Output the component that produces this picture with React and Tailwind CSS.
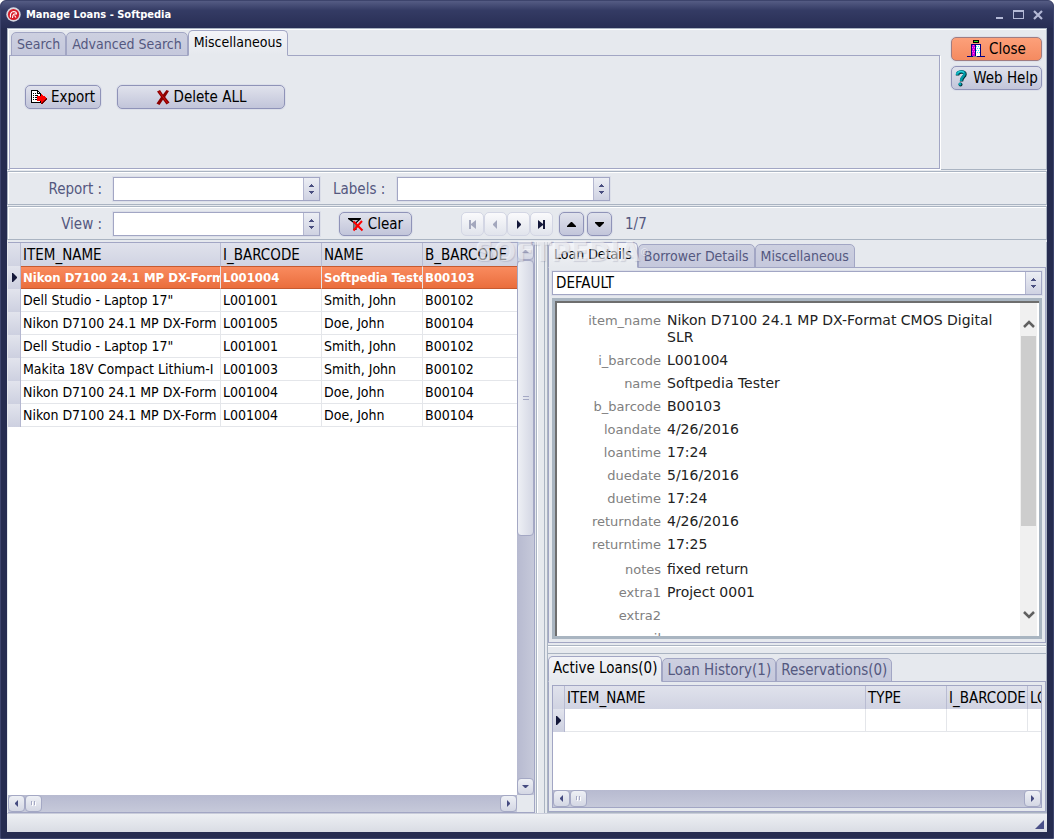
import React, { useState } from "react";
import clsx from "clsx";

const loans = [
  ["Nikon D7100 24.1 MP DX-Form", "L001004", "Softpedia Tester", "B00103"],
  ['Dell Studio - Laptop 17"', "L001001", "Smith, John", "B00102"],
  ["Nikon D7100 24.1 MP DX-Form", "L001005", "Doe, John", "B00104"],
  ['Dell Studio - Laptop 17"', "L001001", "Smith, John", "B00102"],
  ["Makita 18V Compact Lithium-I", "L001003", "Smith, John", "B00102"],
  ["Nikon D7100 24.1 MP DX-Form", "L001004", "Doe, John", "B00104"],
  ["Nikon D7100 24.1 MP DX-Form", "L001004", "Doe, John", "B00104"],
];

const details = [
  ["item_name", "Nikon D7100 24.1 MP DX-Format CMOS Digital SLR"],
  ["i_barcode", "L001004"],
  ["name", "Softpedia Tester"],
  ["b_barcode", "B00103"],
  ["loandate", "4/26/2016"],
  ["loantime", "17:24"],
  ["duedate", "5/16/2016"],
  ["duetime", "17:24"],
  ["returndate", "4/26/2016"],
  ["returntime", "17:25"],
  ["notes", "fixed return"],
  ["extra1", "Project 0001"],
  ["extra2", ""],
  ["email", ""],
];

function Tabs({ items, active, onChange, label, tabClass = "px-[5px] text-[14px]" }) {
  return (
    <div role="tablist" aria-label={label} className="relative z-10 -mb-px flex items-end">
      {items.map((item, i) => (
        <button
          key={item}
          role="tab"
          aria-selected={i === active}
          onClick={() => onChange(i)}
          className={clsx(
            "shrink-0 whitespace-nowrap rounded-t-[5px] border border-[#a2a6c4]",
            tabClass,
            i === active
              ? "h-[26px] border-b-[#e6e9ee] bg-linear-to-b from-[#f3f4f8] to-[#e6e9ee] pb-[3px] text-black"
              : "h-6 bg-linear-to-b from-[#cdd0e0] to-[#c5c8dc] text-[#54587f]"
          )}
        >
          {item}
        </button>
      ))}
    </div>
  );
}

function Combo({ label, options, className }) {
  return (
    <span
      className={clsx(
        "flex h-6 min-w-0 border border-[#a2a6c4] bg-white shadow-[0_0_0_1px_#dcdfe9]",
        className
      )}
    >
      <select
        aria-label={label}
        className="min-w-0 flex-1 appearance-none bg-white px-[3px] text-[15px] text-black outline-none"
      >
        {options.map((o) => (
          <option key={o}>{o}</option>
        ))}
      </select>
      <span className="flex w-4 items-center justify-center border-l border-[#b4b7d0] bg-linear-to-b from-[#eceef4] to-[#cfd2e2]">
        <svg width="7" height="10" viewBox="0 0 7 10" fill="#4a4f80" shapeRendering="crispEdges">
          <path d="M3 0h1v1h1v1h1v1H1V2h1V1h1zM1 7h5v1H5v1H4v1H3V9H2V8H1z" />
        </svg>
      </span>
    </span>
  );
}

function Button({ children, className, tone = "normal", ...rest }) {
  return (
    <button
      className={clsx(
        "flex h-6 items-center justify-center whitespace-nowrap rounded-[5px] border text-[15px] shadow-[0_0_0_1px_#dcdfe9]",
        tone === "hot"
          ? "border-[#a07c80] bg-linear-to-b from-[#fca07a] to-[#f58a60]"
          : "border-[#8f93b8] bg-linear-to-b from-[#e0e2ec] to-[#c2c5da]",
        className
      )}
      {...rest}
    >
      {children}
    </button>
  );
}

function NavButton({ label, path, muted }) {
  return (
    <button
      aria-label={label}
      className="flex h-6 w-[23px] items-center justify-center rounded-[5px] border border-[#d3d6e4] bg-linear-to-b from-[#fafafc] to-[#e1e4ec]"
    >
      <svg width="9" height="11" viewBox="0 0 9 11" fill={muted ? "#a3a7bd" : "#14183a"}>
        <path d={path} />
      </svg>
    </button>
  );
}

const arrows = {
  up: "M1 6h7L5 3H4z",
  down: "M1 3h7L5 6H4z",
  left: "M6 1v7L3 5V4z",
  right: "M3 1v7l3-3V4z",
};

function ScrollButton({ dir }) {
  return (
    <button
      aria-label={"Scroll " + dir}
      className="flex h-[17px] w-[17px] shrink-0 items-center justify-center rounded-[4px] border border-[#a4a8c4] bg-linear-to-b from-[#eef0f5] to-[#d4d7e4]"
    >
      <svg width="9" height="9" viewBox="0 0 9 9" fill="#454b80">
        <path d={arrows[dir]} />
      </svg>
    </button>
  );
}

function HScroll() {
  return (
    <div className="flex h-[17px] bg-linear-to-b from-[#b7bad0] to-[#c6c9da]">
      <ScrollButton dir="left" />
      <div className="flex w-[17px] items-center justify-center rounded-[4px] border border-[#a4a8c4] bg-linear-to-b from-[#eef0f5] to-[#d4d7e4]">
        <svg width="6" height="5" viewBox="0 0 6 5" shapeRendering="crispEdges">
          <path d="M1 1h1v4H1zM4 1h1v4H4z" fill="#fff" />
          <path d="M0 0h1v4H0zM3 0h1v4H3z" fill="#a4a8c4" />
        </svg>
      </div>
      <div className="flex-1" />
      <ScrollButton dir="right" />
    </div>
  );
}

function RowMarker() {
  return (
    <svg width="5" height="9" viewBox="0 0 5 9" className="mx-auto" fill="#14183a">
      <path d="M0 0h1l4 4v1L1 9H0z" />
    </svg>
  );
}

function AppIcon() {
  return (
    <svg width="15" height="15" viewBox="0 0 15 15">
      <circle cx="7.500" cy="7.500" r="7.200" fill="#d8d8e0" />
      <circle cx="7.500" cy="7.500" r="5.600" fill="#d81c28" />
      <path
        d="M4.500 10.500c-.5-3 .5-5.500 3-6 2 0 3 .8 3 2.500H8M6.500 11c0-2 0-3 1.500-4M8.500 8.500l1.500 2"
        fill="none"
        stroke="#fff"
        strokeWidth="1.100"
      />
    </svg>
  );
}

function ExportIcon() {
  return (
    <svg width="16" height="16" viewBox="0 0 16 16" shapeRendering="crispEdges">
      <path d="M.5 1.500h6l3 3v9h-9z" fill="#fff" stroke="#000" />
      <path d="M6.500 1.500v3h3" fill="none" stroke="#000" />
      <path d="M2 4h1v1H2zM4 4h1v1H4zM2 6h1v1H2zM4 6h3v1H4zM2 8h1v1H2zM4 8h2v1H4zM2 10h1v1H2zM4 10h2v1H4z" fill="#000" />
      <path d="M6 7h4V4.500L16 9.500l-5.500 5.500H10v-3H6z" fill="#f00" />
      <path d="M10.500 15L16 9.500" stroke="#700000" />
    </svg>
  );
}

function DeleteIcon() {
  return (
    <svg width="14" height="15" viewBox="0 0 14 15">
      <path
        d="M1 1.500L4 0l3 4.500L10.500 0 13 1 9.200 7l4.300 5.500-3 2L7 9.800 3.500 15 .5 13.500 5 7z"
        fill="#8c0000"
      />
      <path d="M3 1.500l4 5.500M7 7l4.500 6" stroke="#d01010" />
    </svg>
  );
}

function DoorIcon() {
  return (
    <svg width="18" height="18" viewBox="0 0 18 18" shapeRendering="crispEdges">
      <path d="M6 0h6v3H6z" fill="#000" />
      <path d="M7 1h4v1H7z" fill="#20e020" />
      <path d="M4 4h10v12h4v1H0v-1h4z" fill="#000080" />
      <path d="M5 5h3v11H5z" fill="#d000d0" />
      <path d="M6 5h1v1H6zM5 7h1v1H5zM7 7h1v1H7zM6 9h1v1H6zM5 11h1v1H5zM7 11h1v1H7zM6 13h1v1H6z" fill="#ff50ff" />
      <path d="M9 5h4v11H9z" fill="#fff" />
      <path d="M9 6h1v1H9zM11 6h1v1h-1zM10 8h1v1h-1zM12 8h1v1h-1zM9 10h1v1H9zM11 10h1v1h-1zM10 12h1v1h-1zM12 12h1v1h-1z" fill="#30e8f0" />
      <path d="M6 16h4v1H6z" fill="#808080" />
    </svg>
  );
}

function HelpIcon() {
  return (
    <svg width="12" height="17" viewBox="0 0 12 17" fill="none">
      <path d="M2.500 5.500C2.500 1 10.500 1 10 4.500 9.800 7 6.500 7 6.500 11.500" stroke="#003038" strokeWidth="3.400" />
      <path d="M2 5C2 .5 10 .5 9.500 4 9.300 6.500 6 6.500 6 11" stroke="#009aa8" strokeWidth="2.600" />
      <path d="M2 3.500C4 1 7 1 9 2.500" stroke="#40e8f0" />
      <circle cx="5.500" cy="14.500" r="2" fill="#003038" />
      <circle cx="5" cy="14" r="1.500" fill="#00a8b8" />
    </svg>
  );
}

function ClearIcon() {
  return (
    <svg width="16" height="15" viewBox="0 0 16 15">
      <path d="M0 1h13v1L8.500 6v7H5.500V6L0 2z" fill="#000" />
      <path d="M4 3h6L7.500 5.500h-1z" fill="#b8bcc8" />
      <path d="M6.500 6.500h1V12h-1z" fill="#fff" />
      <path d="M5.500 4.500l9 9M14 4l-8.500 9.500" stroke="#f00" strokeWidth="2" />
    </svg>
  );
}

const headCell =
  "h-[23px] overflow-hidden border-r border-[#b9bcd2] pl-0.5 text-left text-[15px] font-normal whitespace-nowrap last:border-r-0";
const bodyCell =
  "h-[23px] overflow-hidden border-r border-b border-[#e4e6ea] pl-0.5 whitespace-nowrap last:border-r-0";
const gutter =
  "border-r border-[#b4b7d0] bg-linear-to-b from-[#e2e4ed] to-[#cdd0e0] p-0";

function LoansGrid() {
  const [selected, setSelected] = useState(0);

  return (
    <div className="ml-px flex min-h-0 flex-col border border-l-0 border-[#a2a6c4] bg-[#e6e9ee]">
      <div className="flex min-h-0 flex-1">
        <div className="min-w-0 flex-1 overflow-hidden bg-white">
          <table className="w-full table-fixed border-separate border-spacing-0">
            <colgroup>
              <col className="w-[13px]" />
              <col />
              <col className="w-[101px]" />
              <col className="w-[101px]" />
              <col className="w-[94px]" />
            </colgroup>
            <thead>
              <tr className="bg-linear-to-b from-[#e0e2ec] to-[#d0d3e2]">
                <th className={headCell} aria-label="Current row" />
                <th className={headCell}>ITEM_NAME</th>
                <th className={headCell}>I_BARCODE</th>
                <th className={headCell}>NAME</th>
                <th className={headCell}>B_BARCODE</th>
              </tr>
            </thead>
            <tbody>
              {loans.map((row, i) => (
                <tr
                  key={i}
                  onClick={() => setSelected(i)}
                  className={clsx(
                    i === selected &&
                      "bg-linear-to-b from-[#fa8c60] to-[#e96c3a] text-[13px] font-bold text-white"
                  )}
                >
                  <td className={gutter}>{i === selected && <RowMarker />}</td>
                  {row.map((cell, j) => (
                    <td
                      key={j}
                      className={clsx(bodyCell, i === selected && "border-t border-y-[#c65a30]")}
                    >
                      {cell}
                    </td>
                  ))}
                </tr>
              ))}
            </tbody>
          </table>
        </div>
        <div className="flex w-[17px] flex-col bg-linear-to-r from-[#b7bad0] to-[#c6c9da]">
          <ScrollButton dir="up" />
          <div className="flex h-1/2 items-center justify-center rounded-[4px] border border-[#a4a8c4] bg-linear-to-r from-[#eef0f5] to-[#d4d7e4]">
            <svg width="6" height="5" viewBox="0 0 6 5" fill="#a4a8c4">
              <path d="M0 0h6v1H0zM0 3h6v1H0z" />
            </svg>
          </div>
          <div className="flex-1" />
          <ScrollButton dir="down" />
        </div>
      </div>
      <div className="pr-[17px]">
        <HScroll />
      </div>
    </div>
  );
}

function LoanDetails() {
  const [tab, setTab] = useState(0);

  return (
    <section className="flex min-h-0 flex-1 flex-col">
      <Tabs
        label="Details"
        items={["Loan Details", "Borrower Details", "Miscellaneous"]}
        active={tab}
        onChange={setTab}
      />
      <div className="flex min-h-0 flex-1 flex-col gap-[3px] border border-[#a2a6c4] p-[3px]">
        <Combo label="Layout" options={["DEFAULT"]} />
        <div className="flex min-h-0 flex-1 border-[3px] border-[#a9b5c1] bg-white">
          <div className="flex min-h-0 min-w-0 flex-1 border-t-2 border-l-2 border-[#6e6e6e] pr-0.5">
            <dl className="grid min-w-0 flex-1 grid-cols-[104px_1fr] content-start gap-x-[6px] gap-y-[6px] overflow-hidden pt-[9px] font-['DejaVu_Sans'] text-[14px] leading-[17px] text-[#222]">
              {details.map(([name, value]) => (
                <React.Fragment key={name}>
                  <dt
                    className={clsx(
                      "text-right text-[13px] text-[#808080]",
                      name === "notes" && "mt-0.5"
                    )}
                  >
                    {name}
                  </dt>
                  <dd className={clsx(name === "notes" && "mt-0.5")}>{value}</dd>
                </React.Fragment>
              ))}
            </dl>
            <div className="flex w-[17px] flex-col items-center bg-[#f0f0f0] py-4">
              <svg width="12" height="9" viewBox="0 0 12 9" className="shrink-0" fill="none" stroke="#606060" strokeWidth="2.500">
                <path d="M1 8l5-5 5 5" />
              </svg>
              <div className="mt-2 h-[63%] w-[15px] bg-[#cdcdcd]" />
              <div className="flex-1" />
              <svg width="12" height="9" viewBox="0 0 12 9" className="shrink-0" fill="none" stroke="#606060" strokeWidth="2.500">
                <path d="M1 1l5 5 5-5" />
              </svg>
            </div>
          </div>
        </div>
      </div>
    </section>
  );
}

function BorrowerLoans() {
  const [tab, setTab] = useState(0);

  return (
    <section>
      <Tabs
        label="Borrower loans"
        items={["Active Loans(0)", "Loan History(1)", "Reservations(0)"]}
        active={tab}
        onChange={setTab}
        tabClass="px-1 text-[15px]"
      />
      <div className="border border-[#a2a6c4] p-[3px]">
        <div className="border border-[#a2a6c4] bg-white">
          <div className="h-[104px] overflow-hidden">
            <table className="w-full table-fixed border-separate border-spacing-0">
              <colgroup>
                <col className="w-3" />
                <col />
                <col className="w-[81px]" />
                <col className="w-[81px]" />
                <col className="w-[13px]" />
              </colgroup>
              <thead>
                <tr className="bg-linear-to-b from-[#e0e2ec] to-[#d0d3e2]">
                  <th className={headCell} aria-label="Current row" />
                  <th className={headCell}>ITEM_NAME</th>
                  <th className={headCell}>TYPE</th>
                  <th className={headCell}>I_BARCODE</th>
                  <th className={headCell}>LO</th>
                </tr>
              </thead>
              <tbody>
                <tr>
                  <td className={gutter}>
                    <RowMarker />
                  </td>
                  <td className={bodyCell} />
                  <td className={bodyCell} />
                  <td className={bodyCell} />
                  <td className={bodyCell} />
                </tr>
              </tbody>
            </table>
          </div>
          <HScroll />
        </div>
      </div>
    </section>
  );
}

const bar =
  "mt-px flex h-[34px] shrink-0 items-center border border-[#aab4c2] pt-0.5 text-[15px] text-[#54587f] shadow-[inset_1px_1px_0_#fff]";

export default function App() {
  const [tab, setTab] = useState(2);

  return (
    <div className="flex h-screen min-h-[640px] flex-col rounded-t-[6px] border border-[#3d446c] bg-[#262c50] px-[6px] pb-[6px] font-['DejaVu_Sans_Condensed','Noto_Sans',sans-serif] text-[14px] leading-5 text-black">
      <header className="-mx-[6px] flex h-[27px] shrink-0 items-center rounded-t-[5px] bg-linear-to-b from-[#555c84] via-[#343b64] via-35% to-[#282e54] px-[5px]">
        <AppIcon />
        <h1 className="ml-[5px] flex-1 text-[11px] font-bold text-white">Manage Loans - Softpedia</h1>
        <div className="flex items-center gap-[9px] pr-[5px] text-[#b4b9d6]">
          <button aria-label="Minimize">
            <svg width="8" height="10" viewBox="0 0 8 10" fill="currentColor">
              <path d="M0 7h7v2H0z" />
            </svg>
          </button>
          <button aria-label="Maximize">
            <svg width="11" height="10" viewBox="0 0 11 10" fill="currentColor">
              <path d="M0 0h11v9H0zM1 2v6h9V2z" fillRule="evenodd" />
            </svg>
          </button>
          <button aria-label="Close window">
            <svg width="10" height="10" viewBox="0 0 10 10" fill="none" stroke="currentColor" strokeWidth="2.200">
              <path d="M1 1l8 8M9 1L1 9" />
            </svg>
          </button>
        </div>
      </header>

      <main className="flex min-h-0 flex-1 flex-col bg-[#e6e9ee]">
        <div className="flex h-[142px] shrink-0 border border-[#aab4c2] pt-px shadow-[inset_1px_1px_0_#fff]">
          <div className="flex min-w-0 flex-1 flex-col pl-px">
            <div className="pl-0.5">
              <Tabs
                label="Loans"
                items={["Search", "Advanced Search", "Miscellaneous"]}
                active={tab}
                onChange={setTab}
              />
            </div>
            <div className="flex flex-1 items-start gap-4 border border-[#a2a6c4] px-[15px] pt-[29px] shadow-[1px_1px_0_#fff]">
              <Button className="w-[76px] gap-1">
                <ExportIcon />
                Export
              </Button>
              <Button className="w-[168px] gap-1">
                <DeleteIcon />
                Delete ALL
              </Button>
            </div>
          </div>
          <div className="flex w-[106px] flex-col gap-[5px] px-[11px] pt-[7px] pr-1">
            <Button tone="hot" className="gap-1">
              <DoorIcon />
              Close
            </Button>
            <Button className="gap-[6px]">
              <HelpIcon />
              Web Help
            </Button>
          </div>
        </div>

        <div className={bar}>
          <span className="w-[94px] text-right">Report :</span>
          <Combo label="Report" options={[""]} className="ml-[11px] w-[207px]" />
          <span className="ml-[13px]">Labels :</span>
          <Combo label="Labels" options={[""]} className="ml-3 w-[213px]" />
        </div>
        <div className={bar}>
          <span className="w-[94px] text-right">View :</span>
          <Combo label="View" options={[""]} className="ml-[11px] w-[207px]" />
          <Button className="ml-[19px] w-[73px] gap-1 text-black">
            <ClearIcon />
            Clear
          </Button>
          <div className="ml-[49px] flex">
            <NavButton label="First" muted path="M1 1h2v9H1zM3 5l5-4v9L3 6z" />
            <NavButton label="Previous" muted path="M2 5l4-4v9L2 6z" />
            <NavButton label="Next" path="M3 1l4 4v1l-4 4z" />
            <NavButton label="Last" path="M6 1h2v9H6zM1 1l5 4v1l-5 4z" />
          </div>
          <div className="ml-[6px] flex gap-[3px]">
            <Button className="w-[25px] text-black" aria-label="Move up">
              <svg width="9" height="5" viewBox="0 0 9 5">
                <path d="M0 5V4l4-4h1l4 4v1z" />
              </svg>
            </Button>
            <Button className="w-[25px] text-black" aria-label="Move down">
              <svg width="9" height="5" viewBox="0 0 9 5">
                <path d="M0 0v1l4 4h1l4-4V0z" />
              </svg>
            </Button>
          </div>
          <span className="ml-[13px]">1/7</span>
        </div>

        <div className="relative grid min-h-0 flex-1 grid-cols-[minmax(0,528fr)_12px_minmax(0,500fr)] pt-[2px]">
          <LoansGrid />
          <div className="mr-[2px] ml-px border-x border-[#aab4c2] bg-[#e6e9ee] shadow-[inset_1px_0_0_#fff]" />
          <div className="flex min-h-0 flex-col border border-t-0 border-[#aab4c2]">
            <LoanDetails />
            <div className="mt-0.5 mb-0.5 h-[9px] shrink-0 border-y border-[#aab4c2] shadow-[inset_0_1px_0_#fff]" />
            <BorrowerLoans />
          </div>
          <span className="pointer-events-none absolute top-0 left-[45%] z-20 font-['DejaVu_Sans'] text-[26px] leading-6 font-bold text-white/50 [text-shadow:1px_1px_1px_rgba(120,125,150,0.25)]">
            SOFTPEDIA<sup className="text-[10px]">®</sup>
          </span>
        </div>

        <footer className="flex h-[19px] shrink-0 items-end justify-end border-t border-[#c9ccda] bg-linear-to-b from-[#edeff3] to-[#d9dce4] p-[3px]">
          <svg width="9" height="9" viewBox="0 0 9 9" fill="#4a5088">
            <path d="M9 0v9H0z" />
          </svg>
        </footer>
      </main>
    </div>
  );
}
